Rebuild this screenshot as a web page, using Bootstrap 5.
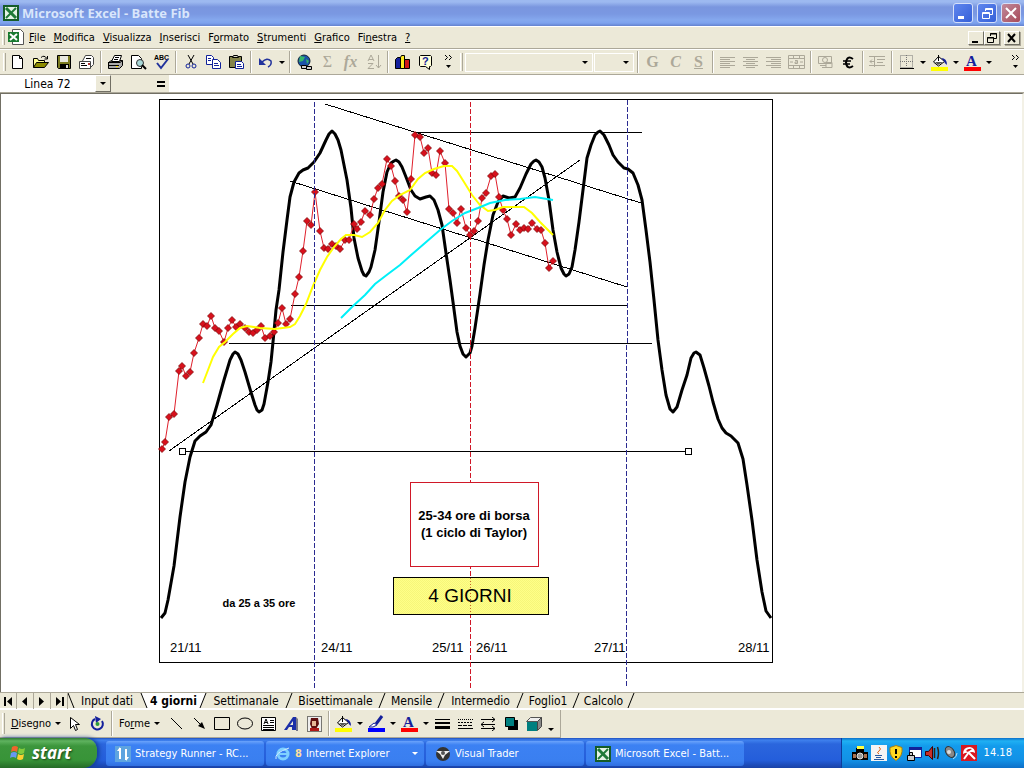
<!DOCTYPE html>
<html lang="it">
<head>
<meta charset="utf-8">
<meta name="viewport" content="width=device-width, initial-scale=1">
<title>Microsoft Excel - Batte Fib</title>
<link href="https://cdn.jsdelivr.net/npm/bootstrap@5.3.0/dist/css/bootstrap.min.css" rel="stylesheet">
<style>
:root{--face:#ece9d8;--shade:#aca899;--ui:"DejaVu Sans Condensed","Noto Sans",sans-serif}
body{font:11px/14px var(--ui);color:#000;background:var(--face);overflow:hidden}
button{border:0;padding:0;background:none;color:inherit;font:inherit}
a{color:inherit;text-decoration:none}
svg{display:block;flex:none}
.titlebar{height:26px;padding:0 3px;background:linear-gradient(#9db9f0 0,#9db9f0 2px,#7a96df 7px,#7a98e2 14px,#85a8ee 20px,#7da2ee 23px,#6482cf 26px)}
.titlebar h1{font:bold 13px/16px "Open Sans",sans-serif;color:#d9e6fb;margin:0 0 0 3px}
.winbtn{width:20px;height:20px;border:1px solid #d5e0fa;border-radius:3px;background:linear-gradient(135deg,#5f86ee,#3560d8)}
.winbtn.shut{background:linear-gradient(135deg,#c08a9c,#a84a58)}
.menubar{height:23px;border-bottom:1px solid var(--shade);border-top:1px solid #fff}
.menubar a{padding:0 4px}
.grip{width:3px;align-self:stretch;margin:3px 2px;border-right:1px solid var(--shade);border-left:1px solid #fff;flex:none}
.docbtn{width:16px;height:14px;background:var(--face);border:1px solid;border-color:#fff #716f64 #716f64 #fff;box-shadow:1px 1px 0 var(--shade)}
.toolrow{height:26px;padding-left:1px;border-top:1px solid #fff;border-bottom:1px solid var(--shade)}
.tb{width:23px;height:22px;display:flex;align-items:center;justify-content:center;flex:none}
.dd{width:10px;height:22px;display:flex;align-items:center;justify-content:center;flex:none}
.dd:not(.more)::after,.arr::after{content:"";border:3px solid transparent;border-top-color:#000;border-bottom:0;width:0}
.split{width:6px;align-self:stretch;flex:none;background:linear-gradient(90deg,transparent 2px,var(--shade) 2px,var(--shade) 3px,#fff 3px,#fff 4px,transparent 4px);margin:1px 0}
.combo{height:19px;border:1px solid #fff;border-radius:0;padding:0;margin-right:1px;background:var(--face) url("data:image/svg+xml,%3Csvg xmlns='http://www.w3.org/2000/svg' width='6' height='3'%3E%3Cpath d='M0 0h6L3 3z'/%3E%3C/svg%3E") no-repeat right 4px center;appearance:none;opacity:1}
.off{color:#aca899;font:bold 16px/20px "Liberation Serif",serif}
.fbar{height:18px;border-bottom:1px solid var(--shade)}
.fbar input{border:0;height:17px;background:#fff;padding:0;min-width:0}
.namebox{width:95px;text-align:center;font-size:12px}
.namedrop{width:16px;height:17px;border:1px solid;border-color:#fff #716f64 #716f64 #fff;display:flex;align-items:center;justify-content:center}
.sheet{background:#fff;border-top:1px solid #716f64;border-left:1px solid #716f64;border-right:2px solid #f3f1e6;min-height:0}
.sheet svg{width:100%;height:100%}
.tabs{height:17px;border-top:1px solid var(--shade);font-size:12px;border-bottom:1px solid #fff}
.tabs a{text-align:center;height:16px;line-height:16px;white-space:nowrap}
.nav4{width:17px;height:16px;border-right:1px solid var(--shade);display:flex;align-items:center;justify-content:center}
.drawrow{height:29px;border-top:1px solid #fff}
.drawbar{border-right:1px solid var(--shade);border-bottom:1px solid var(--shade);height:28px}
.taskbar{height:30px;background:linear-gradient(#1f4fbd 0,#3f81ee 2px,#2b66dd 6px,#245edb 22px,#1941a5 30px);color:#fff}
.startbtn{width:97px;background:linear-gradient(#2f7a31 0,#5fb35f 3px,#3c963c 8px,#389438 22px,#256b27 30px);border-radius:0 12px 14px 0;box-shadow:2px 0 4px #123c94;font:italic bold 17px/24px "Open Sans",sans-serif;text-shadow:1px 1px 2px #1a451a}
.taskbtn{flex:0 1 158px;margin:3px 1px 2px;border-radius:3px;background:linear-gradient(#6ba3fb 0,#3c81f3 4px,#3a7ff0 20px,#306fe0 25px);min-width:0;white-space:nowrap;padding:0 6px 0 9px;text-align:left}
.tray{width:183px;border-left:1px solid #0c3c9c;background:linear-gradient(#0d6fc8 0,#1fb0f3 3px,#139bec 8px,#1291e6 22px,#0d6fc8 30px);padding:0 12px 0 10px}
.k{fill:none;stroke:#000}
</style>
</head>
<body class="vh-100 d-flex flex-column">

<header class="titlebar d-flex align-items-center flex-shrink-0">
  <svg width="16" height="16"><path fill="#155c28" d="M0 0h16v16H0z"/><path fill="#e5f3e5" d="M2 2h12v12H2z"/><path stroke="#1f7a38" stroke-width="3" d="M3 3l10 10"/><path stroke="#1f7a38" stroke-width="2" d="M13 3L3 13"/></svg>
  <h1 class="flex-grow-1">Microsoft Excel - Batte Fib</h1>
  <div class="d-flex gap-1">
    <button class="winbtn" aria-label="Riduci a icona"><svg width="18" height="18"><path fill="#fff" d="M4 12h6v3H4z"/></svg></button>
    <button class="winbtn" aria-label="Ripristina"><svg width="18" height="18" fill="none" stroke="#fff"><path d="M7.500 7V4.500h7v6H12M4.500 8.500h7v6h-7zM4 9.500h8M7 5.500h8"/></svg></button>
    <button class="winbtn shut" aria-label="Chiudi"><svg width="18" height="18"><path stroke="#fff" stroke-width="2" d="M4 4l10 10M14 4L4 14"/></svg></button>
  </div>
</header>

<nav class="menubar d-flex align-items-center flex-shrink-0 pe-1" aria-label="Menu">
  <span class="grip"></span>
  <svg width="18" height="17"><path fill="#fff" stroke="#555" d="M5.500.5h8l3 3v12h-11z"/><path fill="#187a30" d="M1 3h11v10H1z"/><path stroke="#fff" stroke-width="2" d="M3 5l7 6M10 5l-7 6"/></svg>
  <a href="#"><u>F</u>ile</a><a href="#"><u>M</u>odifica</a><a href="#"><u>V</u>isualizza</a><a href="#"><u>I</u>nserisci</a><a href="#">F<u>o</u>rmato</a><a href="#"><u>S</u>trumenti</a><a href="#"><u>G</u>rafico</a><a href="#">Fi<u>n</u>estra</a><a href="#"><u>?</u></a>
  <div class="d-flex ms-auto">
    <button class="docbtn" aria-label="Riduci cartella"><svg width="13" height="12"><path d="M3 9h6v2H3z"/></svg></button>
    <button class="docbtn" aria-label="Ripristina cartella"><svg width="13" height="12" class="k"><path d="M5.500 4V1.500h6v5H9M5 2h7M2.500 5.500h6v5h-6zM2 6h7"/></svg></button>
    <button class="docbtn ms-1" aria-label="Chiudi cartella"><svg width="13" height="12"><path stroke="#000" stroke-width="2" d="M3 2l7 8M10 2L3 10"/></svg></button>
  </div>
</nav>

<div class="toolrow d-flex align-items-center flex-shrink-0" role="toolbar" aria-label="Standard e formattazione">
  <span class="grip me-0"></span>
  <button class="tb" aria-label="Nuovo"><svg width="16" height="16"><path fill="#fff" stroke="#000" d="M2.500 1.500h7l3 3v10h-10zM9.500 1.500v3h3"/></svg></button>
  <button class="tb" aria-label="Apri"><svg width="17" height="16"><path fill="#ffff90" stroke="#000" d="M1.500 13.500v-9h4l1 2h6v2"/><path fill="#8c8c00" stroke="#000" d="M1.500 13.500l3-5h12l-4 5z"/><path class="k" d="M9 3.500q3-3 6 1M15.500 2v3h-3"/></svg></button>
  <button class="tb" aria-label="Salva"><svg width="16" height="16"><path fill="#7b7b20" stroke="#000" d="M1.500 1.500h13v13h-12l-1-1z"/><path fill="#e8e8e0" d="M4 2h8v6H4z"/><path d="M4 10h9v5H4z"/><path fill="#ddd" d="M10 11h2v3h-2z"/></svg></button>
  <button class="tb" aria-label="Posta"><svg width="17" height="16"><path fill="#fff" stroke="#444" d="M4.500 7L7.500 1.500h6l2 2v7l-3 3"/><path fill="#fff" stroke="#444" d="M1.500 7.500h11v7h-11z"/><path class="k" d="M3 9.500h4M3 11.500h6M8 4.500h5"/><path fill="#a33" d="M10 9h2v2h-2z"/></svg></button>
  <span class="split"></span>
  <button class="tb" aria-label="Stampa"><svg width="17" height="16"><path fill="#aaa" stroke="#000" d="M1.500 8.500l3-2h11v5l-3 3h-11z"/><path fill="#fff" stroke="#000" d="M4.500 7.500l3-6h7l-2 6z"/><path class="k" d="M1 8.500h12l2.500-2M2 11.500h10M8 3.500h4M7 5.500h4"/><path fill="#fd0" d="M9 12h2v1H9z"/></svg></button>
  <button class="tb" aria-label="Anteprima"><svg width="17" height="16"><path fill="#fff" stroke="#000" d="M1.500 1.500h7l3 3v10h-10z"/><circle cx="10" cy="9" r="3.500" fill="#a8d8d8" stroke="#333"/><path stroke="#000" stroke-width="2" d="M12 11l4 4"/></svg></button>
  <button class="tb" aria-label="Controllo ortografia"><svg width="17" height="16"><text x="1" y="6" font-size="7" font-weight="bold" font-family="Liberation Sans,sans-serif">ABC</text><path fill="none" stroke="#22339c" stroke-width="2" d="M4 9l4 5 7-9"/></svg></button>
  <span class="split"></span>
  <button class="tb" aria-label="Taglia"><svg width="16" height="16" fill="none"><path stroke="#000" d="M5 1l5 9M11 1L6 10"/><circle cx="5" cy="12" r="2" stroke="#129"/><circle cx="11" cy="12" r="2" stroke="#129"/></svg></button>
  <button class="tb" aria-label="Copia"><svg width="17" height="16"><path fill="#fff" stroke="#129" d="M1.500 1.500h5l2 2v7h-7z"/><path fill="#fff" stroke="#129" d="M7.500 5.500h5l3 3v6h-8z"/><path stroke="#129" d="M3 4.500h3M3 6.500h3M9 9.500h4M9 11.500h5"/></svg></button>
  <button class="tb" aria-label="Incolla"><svg width="17" height="16"><path fill="#84844a" stroke="#000" d="M1.500 2.500h12v11h-12z"/><path fill="#ddc" stroke="#000" d="M4.500 3.500l1-2h4l1 2z"/><path fill="#fff" stroke="#129" d="M7.500 7.500h6l2 2v5h-8z"/><path stroke="#129" d="M9 10.500h4M9 12.500h5"/></svg></button>
  <span class="split"></span>
  <button class="tb" aria-label="Annulla"><svg width="16" height="14"><path fill="none" stroke="#22339c" stroke-width="1.500" d="M4 7q5-5 9-1 1 4-3 6"/><path fill="#22339c" d="M1 3v7h7z"/></svg></button>
  <button class="dd" aria-label="Elenco annulla"></button>
  <span class="split"></span>
  <button class="tb" aria-label="Collegamento"><svg width="17" height="17"><circle cx="8" cy="7" r="6" fill="#1a52a8" stroke="#123"/><path fill="#35b56a" d="M4 2l5 1-2 4-4 1zM10 5l3 2-2 3z"/><path fill="#ccc" stroke="#000" d="M5.500 11.500h5v3h-5zM10.500 12.500h5v3h-5z"/></svg></button>
  <button class="tb off fw-normal" disabled>Σ</button>
  <button class="tb off fst-italic" disabled>fx</button>
  <button class="tb" disabled aria-label="Ordina"><svg width="16" height="16" fill="none" stroke="#aca899"><path d="M2 7l3-6 3 6M3 5.500h4M2 9.500h5l-5 5h6M12.500 1v13M10 11l2.500 3 2.500-3"/></svg></button>
  <span class="split"></span>
  <button class="tb" aria-label="Grafico"><svg width="17" height="16" stroke="#000"><path fill="#14209c" d="M1.500 5.500l2-2h3v11h-5z"/><path fill="#ffec20" d="M6.500 3.500l1-2h3v13h-4z"/><path fill="#d01818" d="M10.500 5.500h5v9h-5z"/></svg></button>
  <button class="tb" aria-label="Guida"><svg width="16" height="16"><path fill="#ffffd8" stroke="#000" d="M2.500 1.500h10l1 1v9l-1 1h-1v3l-4-3h-5l-1-1v-9z"/><text x="4" y="11" font-size="11" font-weight="bold" fill="#129" font-family="Liberation Sans,sans-serif">?</text></svg></button>
  <button class="tb" aria-label="Altri pulsanti"><svg width="9" height="16"><path class="k" d="M1 1l2.500 2.500L1 6M5 1l2.500 2.500L5 6"/><path d="M2 11h5l-2.500 3z"/></svg></button>
  <span class="grip ms-0"></span>
  <select class="combo flex-shrink-1" style="width:128px" disabled aria-label="Tipo di carattere"></select>
  <select class="combo flex-shrink-1" style="width:40px" disabled aria-label="Dimensione"></select>
  <span class="split"></span>
  <button class="tb off" disabled>G</button><button class="tb off fst-italic" disabled>C</button><button class="tb off text-decoration-underline" disabled>S</button>
  <span class="split"></span>
  <button class="tb" disabled aria-label="A sinistra"><svg width="15" height="13" stroke="#aca899"><path d="M0 1.500h15M0 3.500h10M0 5.500h15M0 7.500h10M0 9.500h15M0 11.500h10"/></svg></button>
  <button class="tb" disabled aria-label="Al centro"><svg width="15" height="13" stroke="#aca899"><path d="M0 1.500h15M3 3.500h9M0 5.500h15M3 7.500h9M0 9.500h15M3 11.500h9"/></svg></button>
  <button class="tb" disabled aria-label="A destra"><svg width="15" height="13" stroke="#aca899"><path d="M0 1.500h15M5 3.500h10M0 5.500h15M5 7.500h10M0 9.500h15M5 11.500h10"/></svg></button>
  <button class="tb" disabled aria-label="Unisci e centra"><svg width="17" height="16" fill="none" stroke="#aca899"><path d="M.5 1.500h16v13H.5zM0 4.500h17M0 11.500h17M5.500 1v3M11.500 1v3M5.500 12v3M11.500 12v3M2 8h3M12 8h3M7 6.500h2.500v3H7v-1.500h2.500"/></svg></button>
  <span class="split"></span>
  <button class="tb" disabled aria-label="Valuta"><svg width="17" height="16" fill="none" stroke="#aca899"><path d="M1.500 2.500h13v7h-13z"/><circle cx="8" cy="6" r="2.500"/><path d="M3 11.500h6M9 8.500h6v5H9zM5 13.500h5"/></svg></button>
  <button class="tb" aria-label="Euro"><svg width="15" height="15"><path fill="none" stroke="#000" stroke-width="2" d="M12 4Q6 0 5 7.500 6 15 12 11"/><path stroke="#000" stroke-width="1.500" d="M2 6h8M2 9h7"/></svg></button>
  <span class="split"></span>
  <button class="tb" disabled aria-label="Riduci rientro"><svg width="17" height="14" stroke="#aca899"><path d="M0 1.500h16M8 4.500h8M8 7.500h6M0 10.500h16M5.500 12V2M1 6.500h5M3 4.500L1 6.500l2 2" fill="none"/></svg></button>
  <span class="split"></span>
  <button class="tb" aria-label="Bordi"><svg width="14" height="14" fill="none" stroke="#777" stroke-dasharray="1 1"><path d="M.5.5h12v12H.5zM6.500 0v12M0 6.500h13"/><path stroke="#000" stroke-dasharray="none" d="M0 13.500h14"/></svg></button><button class="dd" aria-label="Elenco bordi"></button>
  <button class="tb" aria-label="Colore riempimento"><svg width="17" height="17"><path fill="#fff" stroke="#000" d="M7.500 2.500l6 5-6 4.500L2.500 8z"/><path fill="#14209c" d="M10 4q6 0 6 7-3-2-3-4z"/><path fill="#555" d="M4 8h8l-5 3z"/><path class="k" d="M7.500 7V1"/><path fill="#ff0" d="M0 13h17v4H0z"/></svg></button><button class="dd" aria-label="Elenco colori riempimento"></button>
  <button class="tb" aria-label="Colore carattere"><svg width="17" height="17"><text x="2" y="12" font-size="15" font-weight="bold" fill="#14209c" font-family="Liberation Serif,serif">A</text><path fill="#f00" d="M0 13h17v4H0z"/></svg></button><button class="dd" aria-label="Elenco colori carattere"></button>
  <button class="dd more ms-auto me-1" aria-label="Altri pulsanti"><svg width="9" height="16"><path class="k" d="M1 1l2.500 2.500L1 6M5 1l2.500 2.500L5 6"/><path d="M2 11h5l-2.500 3z"/></svg></button>
</div>

<div class="fbar d-flex flex-shrink-0">
  <input class="namebox" value="Linea 72" aria-label="Casella nome">
  <button class="namedrop arr" aria-label="Elenco nomi"></button>
  <button class="pe-1" style="width:58px" aria-label="Modifica formula"><svg class="ms-auto" width="8" height="8"><path d="M0 1h8v2H0zM0 5h8v2H0z"/></svg></button>
  <input class="flex-grow-1" aria-label="Barra della formula">
</div>

<main class="sheet flex-grow-1">
<svg viewBox="1 94 1021 598" preserveAspectRatio="xMinYMin meet" font-family="Liberation Sans,sans-serif" role="img" aria-label="Grafico 4 giorni">
  <defs>
    <marker id="rhomb" viewBox="-4 -4 8 8" markerWidth="8" markerHeight="8" markerUnits="userSpaceOnUse"><path fill="#d8101c" stroke="#700" stroke-width=".7" d="M0-3.500L3.500 0 0 3.500-3.500 0z"/></marker>
    <pattern id="dots" width="2" height="2" patternUnits="userSpaceOnUse"><path fill="#ff8" d="M0 0h2v2H0z"/><path fill="#f6f67a" d="M0 0h1v1H0zM1 1h1v1H1z"/></pattern>
  </defs>
  <path class="k" shape-rendering="crispEdges" d="M159.500 99.500h613v563h-613z"/>
  <g stroke="#000" shape-rendering="crispEdges">
    <path d="M325 104L641 203M290 181L627 287M169 451L580 160M415 132.500H642M291 305.500H627M229 343.500H652M185 451.500H686"/>
  </g>
  <polyline fill="none" stroke="#000" stroke-width="3" stroke-linejoin="round" points="161,618 165,613 168,600 174,566 180,517 185,482 190,457 195,441 200,436 206,432 211,425 217,405 224,380 230,360 233,354 235,352 238,354 241,360 245,372 250,389 255,405 257,410 259,412 262,410 264,404 268,382 271,362 273,342 276,310 279,290 283,252 287,220 290,197 294,182 299,173 303,170 308,168 314,162 320,153 326,140 329,134 332,131 335,134 338,140 341,150 347,180 351,208 354,238 358,258 362,271 364,275 366,276 369,272 371,267 375,250 379,222 383,192 387,172 391,163 394,161 396,160 399,162 402,167 406,177 411,190 415,196 420,199 426,197 430,196 434,200 438,210 442,225 446,253 450,280 453,302 457,332 460,346 463,354 466,357 470,353 472,346 475,328 480,294 484,265 488,240 493,215 498,202 503,196 509,198 515,197 520,188 526,174 531,164 534,161 536,160 539,162 542,167 545,178 549,200 553,230 557,252 561,268 564,274 566,276 569,274 572,267 575,250 579,222 583,190 587,158 591,145 595,135 598,132 600,131 604,135 609,145 613,155 618,162 624,168 628,169 633,173 638,185 642,200 646,230 650,262 654,300 658,340 662,370 666,395 670,409 673,412 677,407 682,390 687,375 691,358 694,353 696,352 700,355 704,368 709,386 713,402 718,419 722,428 726,433 731,436 738,443 743,459 747,485 752,520 757,560 762,592 766,611 771,618"/>
  <polyline fill="none" stroke="#e0202c" marker-start="url(#rhomb)" marker-mid="url(#rhomb)" marker-end="url(#rhomb)" points="162,449 165,442 169,417 174,414 179,371 182,366 186,376 190,372 194,353 199,338 203,324 207,326 211,316 215,328 219,331 224,342 228,328 232,320 236,327 240,324 245,328 249,332 253,333 257,330 261,326 265,338 270,336 274,332 278,323 282,308 286,324 290,319 295,294 299,277 303,251 307,221 311,225 315,192 320,231 324,248 328,249 332,244 336,246 340,249 345,240 349,240 354,224 357,229 361,222 365,211 370,215 374,199 378,188 382,184 387,159 391,166 395,181 399,196 403,200 407,212 411,179 415,135 420,137 424,153 428,148 432,173 436,175 440,151 445,163 449,209 453,213 457,223 461,209 466,228 470,235 474,231 478,221 482,198 486,193 491,176 495,174 499,197 503,210 507,219 511,235 516,224 520,230 524,228 528,229 532,223 537,229 541,230 545,243 549,268 553,261"/>
  <polyline fill="none" stroke="#ff0" stroke-width="2" points="203,383 208,370 213,357 219,347 225,342 233,334 240,328 247,326 260,328 275,329 290,327 295,324 300,316 306,304 313,286 320,270 327,257 334,247 341,239 346,235 354,235 362,237 370,232 378,223 385,210 392,201 400,195 410,190 418,179 425,173 434,169 444,166 452,166 457,171 464,182 472,195 480,205 488,211 495,210 503,207 524,207 532,213 540,222 553,235"/>
  <polyline fill="none" stroke="#00f0f8" stroke-width="2" points="341,318 352,307 365,295 375,284 388,274 400,265 410,256 425,243 440,230 452,221 465,213 478,208 490,203 505,200 520,199 535,197 553,200"/>
  <path fill="#fff" stroke="#000" shape-rendering="crispEdges" d="M179.500 448.500h6v6h-6zM685.500 448.500h6v6h-6z"/>
  <g fill="none" stroke-dasharray="5 2" shape-rendering="crispEdges"><path stroke="#2a2a90" d="M314.500 102V688M627.500 100V345M626.500 345V688"/><path stroke="#d01828" d="M470.500 102V688"/></g>
  <path fill="#fff" stroke="#d01828" shape-rendering="crispEdges" d="M410.500 482.500h128v84h-128z"/>
  <path fill="url(#dots)" stroke="#000" shape-rendering="crispEdges" d="M393.500 577.500h155v37h-155z"/>
  <path stroke="#c86428" stroke-dasharray="1 2" d="M470.500 578v36"/>
  <g text-anchor="middle"><text x="474" y="520" font-size="13" font-weight="bold">25-34 ore di borsa</text><text x="474" y="537" font-size="13" font-weight="bold">(1 ciclo di Taylor)</text><text x="470" y="602" font-size="19">4 GIORNI</text><text x="259" y="607" font-size="11" font-weight="bold">da 25 a 35 ore</text></g>
  <g font-size="13"><text x="170" y="652">21/11</text><text x="321" y="652">24/11</text><text x="432" y="652">25/11</text><text x="476" y="652">26/11</text><text x="594" y="652">27/11</text><text x="738" y="652">28/11</text></g>
</svg>
</main>

<nav class="tabs d-flex flex-shrink-0" aria-label="Fogli">
  <button class="nav4" aria-label="Primo"><svg width="9" height="9"><path d="M0 0h2v9H0zM8 0v9L3 4.500z"/></svg></button>
  <button class="nav4" aria-label="Precedente"><svg width="6" height="9"><path d="M5 0v9L0 4.500z"/></svg></button>
  <button class="nav4" aria-label="Successivo"><svg width="6" height="9"><path d="M0 0v9l5-4.500z"/></svg></button>
  <button class="nav4" aria-label="Ultimo"><svg width="9" height="9"><path d="M7 0h2v9H7zM1 0v9l5-4.500z"/></svg></button>
  <svg width="7" height="16" class="k"><path d="M0 0l6 15"/></svg>
  <a href="#" style="width:64px">Input dati</a>
  <svg width="9" height="16"><path fill="#fff" d="M2 0h7v16H8z"/><path class="k" d="M2 0l6 15"/></svg>
  <a href="#" class="bg-white fw-bold" style="width:51px">4 giorni</a>
  <svg width="8" height="16"><path fill="#fff" d="M0 0h7L1 16H0z"/><path class="k" d="M7 0L1 15"/></svg>
  <a href="#" style="width:78px">Settimanale</a><svg width="8" height="16" class="k"><path d="M7 0L1 15"/></svg>
  <a href="#" style="width:85px">Bisettimanale</a><svg width="8" height="16" class="k"><path d="M7 0L1 15"/></svg>
  <a href="#" style="width:51px">Mensile</a><svg width="8" height="16" class="k"><path d="M7 0L1 15"/></svg>
  <a href="#" style="width:71px">Intermedio</a><svg width="8" height="16" class="k"><path d="M7 0L1 15"/></svg>
  <a href="#" style="width:48px">Foglio1</a><svg width="8" height="16" class="k"><path d="M7 0L1 15"/></svg>
  <a href="#" style="width:47px">Calcolo</a><svg width="8" height="16" class="k"><path d="M7 0L1 15"/></svg>
</nav>

<div class="drawrow flex-shrink-0 d-flex" role="toolbar" aria-label="Disegno">
 <div class="drawbar d-flex align-items-center">
  <span class="grip me-1"></span>
  <button class="arr d-flex align-items-center justify-content-center gap-1" style="width:54px"><span><u>D</u>isegno</span></button>
  <button class="tb" aria-label="Seleziona"><svg width="12" height="16"><path fill="#fff" stroke="#000" d="M1.500 1.500v11l3-3 2 5 2-1-2-5h4z"/></svg></button>
  <button class="tb" aria-label="Ruota"><svg width="15" height="15"><path fill="none" stroke="#14209c" stroke-width="2" d="M5 3a5.500 5.500 0 1 0 7 2"/><path fill="#14209c" d="M5 0l6 3-5 4z"/><circle cx="7.500" cy="8" r="2" fill="#2b9c3a"/></svg></button>
  <span class="split me-1"></span>
  <button class="arr d-flex align-items-center gap-1" style="width:46px"><span>Fo<u>r</u>me</span></button>
  <button class="tb" aria-label="Linea"><svg width="13" height="13"><path class="k" d="M1 1l11 11"/></svg></button>
  <button class="tb" aria-label="Freccia"><svg width="13" height="13"><path class="k" d="M1 1l9 9"/><path d="M12 12L5 9l4-4z"/></svg></button>
  <button class="tb" aria-label="Rettangolo"><svg width="17" height="13"><path class="k" d="M.5.5h15v12H.5z"/></svg></button>
  <button class="tb" aria-label="Ovale"><svg width="17" height="13"><ellipse class="k" cx="8" cy="6.500" rx="7.500" ry="5.500"/></svg></button>
  <button class="tb" aria-label="Casella di testo"><svg width="16" height="16"><path fill="#fff" stroke="#000" d="M.5 1.500h14v13H.5z"/><path class="k" d="M3 8l2-5 2 5M4 6.500h2M9 4.500h4M9 6.500h4M2 9.500h11M2 11.500h11M2 13.500h11"/></svg></button>
  <button class="tb" aria-label="WordArt"><svg width="17" height="16"><path fill="#1c2fa8" d="M1 14L10 1h3v13H9v-3H6l-2 3zM7 9h3V5z"/><path fill="#778" d="M13 1l2 2v12h-2z"/></svg></button>
  <button class="tb" aria-label="ClipArt"><svg width="15" height="16"><path fill="#eee" stroke="#000" stroke-dasharray="1 1" d="M.5.5h14v15H.5z"/><path fill="#601010" d="M4 2h7l1 6-3 5H5L3 8z"/><path fill="#e8b898" d="M5 5h4v5H5z"/><path fill="#b01818" d="M3 12h9v3H3z"/></svg></button>
  <span class="split"></span>
  <button class="tb" aria-label="Riempimento"><svg width="17" height="17"><path fill="#fff" stroke="#000" d="M7.500 2.500l6 5-6 4.500L2.500 8z"/><path fill="#14209c" d="M10 4q6 0 6 7-3-2-3-4z"/><path fill="#555" d="M4 8h8l-5 3z"/><path class="k" d="M7.500 7V1"/><path fill="#ff0" d="M0 13h17v4H0z"/></svg></button><button class="dd" aria-label="Elenco riempimenti"></button>
  <button class="tb" aria-label="Colore linea"><svg width="17" height="17"><path stroke="#14209c" stroke-width="3" d="M8 9l6-8"/><path fill="#fff" stroke="#14209c" d="M6 8l3 2-4 2H1z"/><path fill="#00f" d="M0 13h17v4H0z"/></svg></button><button class="dd" aria-label="Elenco colori linea"></button>
  <button class="tb" aria-label="Colore carattere"><svg width="17" height="17"><text x="2" y="12" font-size="15" font-weight="bold" fill="#14209c" font-family="Liberation Serif,serif">A</text><path fill="#f00" d="M0 13h17v4H0z"/></svg></button><button class="dd" aria-label="Elenco colori carattere"></button>
  <button class="tb" aria-label="Stile linea"><svg width="15" height="12"><path d="M0 1h15v1H0zM0 4h15v2H0zM0 8h15v3H0z"/></svg></button>
  <button class="tb" aria-label="Stile tratteggio"><svg width="15" height="12" class="k"><path stroke-dasharray="1 1" d="M0 1.500h15"/><path stroke-dasharray="2 1" d="M0 4.500h15"/><path stroke-dasharray="4 1" d="M0 7.500h15"/><path d="M0 10.500h15"/></svg></button>
  <button class="tb" aria-label="Stile freccia"><svg width="15" height="14" class="k"><path d="M0 2.500h14M11 0l3 2.500L11 5M0 7.500h14M3 5L0 7.500 3 10M0 11.500h14M11 9l3 2.500-3 2.500"/></svg></button>
  <button class="tb" aria-label="Ombreggiatura"><svg width="14" height="14"><path d="M3 3h10v10H3z"/><path fill="#008080" stroke="#000" d="M.5.5h9v9h-9z"/></svg></button>
  <button class="tb" aria-label="3D"><svg width="17" height="16"><path fill="#008080" d="M1 5h10v10H1z"/><path fill="#eee" stroke="#555" d="M.5 5.500l4-4h11l-4 4z"/><path fill="#888" stroke="#444" d="M11.500 5.500l4-4v9l-4 4z"/></svg></button>
  <button class="dd align-items-end pb-1 me-1" aria-label="Altri pulsanti"></button>
 </div>
</div>

<footer class="taskbar d-flex flex-shrink-0">
  <button class="startbtn d-flex align-items-center ps-2 me-2 flex-shrink-0"><svg width="20" height="18" class="me-1"><path fill="#f0642c" d="M4 3q3-2 6 0L9 8Q6 6 3 8z"/><path fill="#84cc3c" d="M11 4q3 2 6 0l-1 5q-3 2-6 0z"/><path fill="#6898f0" d="M3 9q3-2 6 0l-1 5q-3-2-6 0z"/><path fill="#fcd030" d="M10 10q3 2 6 0l-1 5q-3 2-6 0z"/></svg>start</button>
  <button class="taskbtn d-flex align-items-center gap-1"><svg width="16" height="16"><path fill="#5ea4e0" d="M0 0h16v16H0z"/><path fill="none" stroke="#fff" stroke-width="2" d="M5 2v11M11 3v11"/><path fill="#fff" d="M2 5l3-4v4zM14 11l-3 4v-4z"/></svg>Strategy Runner - RC...</button>
  <button class="taskbtn d-flex align-items-center gap-1"><svg width="16" height="16"><circle cx="8" cy="8" r="5" fill="none" stroke="#7fd0ff" stroke-width="3"/><path stroke="#7fd0ff" stroke-width="2" d="M4 8h9"/><path fill="none" stroke="#cfeaff" d="M1 13Q-1 7 14 2"/></svg><b style="color:#ffdf9c">8</b> Internet Explorer<svg class="ms-auto" width="6" height="3"><path fill="#fff" d="M0 0h6L3 3z"/></svg></button>
  <button class="taskbtn d-flex align-items-center gap-1"><svg width="16" height="16"><circle cx="8" cy="8" r="7" fill="#333"/><path fill="#eee" d="M1 5h14l-5 4-2 4-3-5z"/><circle cx="8" cy="7" r="2" fill="#555"/></svg>Visual Trader</button>
  <button class="taskbtn d-flex align-items-center gap-1"><svg width="16" height="16"><path fill="#155c28" d="M0 0h16v16H0z"/><path fill="#e5f3e5" d="M2 2h12v12H2z"/><path stroke="#1f7a38" stroke-width="3" d="M3 3l10 10"/><path stroke="#1f7a38" stroke-width="2" d="M13 3L3 13"/></svg>Microsoft Excel - Batt...</button>
  <div class="tray d-flex align-items-center ms-auto flex-shrink-0 justify-content-between">
    <svg width="16" height="16"><path d="M0 7h16v8H0zM4 3h8v4H4z"/><path fill="#ff4" d="M5 1h7v3H5z"/><circle cx="8" cy="11" r="3" fill="#999" stroke="#ddd"/><path fill="#a87050" d="M1 9h3v4H1zM12 9h3v4h-3z"/></svg>
    <svg width="16" height="16"><path fill="#f4f4f4" d="M0 0h16v16H0z"/><path fill="none" stroke="#e06010" d="M8 2q3 2 0 4t0 3"/><path fill="none" stroke="#2858a0" d="M4 10.500h7M5 12.500h5M3 14.500h10"/></svg>
    <svg width="14" height="16"><path fill="#ffd820" stroke="#a88010" d="M7 .5l6 2q1 9-6 13Q0 11.500 1 2.500z"/><path d="M6 4h2v5H6zM6 11h2v2H6z"/></svg>
    <svg width="16" height="16"><path fill="#fff" stroke="#129" d="M3.500 2.500h12v10h-12z"/><path fill="#129" d="M3 2h13v3H3z"/><path fill="#ccc" stroke="#000" d="M1.500 10.500h7v5h-7zM3.500 10V7.500h3V10"/></svg>
    <svg width="16" height="16"><path fill="#c83028" stroke="#400" d="M1.500 6.500h3l4-5v13l-4-4h-3z"/><path fill="none" stroke="#321" stroke-width="1.500" d="M10.500 3v10M13.500 2q2 6 0 12"/></svg>
    <svg width="16" height="16"><ellipse cx="7" cy="7" rx="4" ry="6" transform="rotate(-35 7 7)" fill="#888" stroke="#333"/><circle cx="6" cy="7" r="2" fill="#ddd"/><path fill="none" stroke="#bde" d="M10 14q4-2 4-6"/></svg>
    <svg width="16" height="16"><path fill="#d81820" d="M0 0h16v16H0z"/><path fill="#fff" d="M2 9Q2 2 9 2q5 1 5 6-3-2-6 0Q5 7 2 9z"/><path fill="#d81820" d="M5 6q2-3 6-2l-4 3z"/><path fill="none" stroke="#fff" stroke-width="2" d="M8 7l-5 7M8 8l6 6"/></svg>
    <time class="ms-1">14.18</time>
  </div>
</footer>
<script src="https://cdn.jsdelivr.net/npm/bootstrap@5.3.0/dist/js/bootstrap.bundle.min.js"></script>
</body>
</html>
